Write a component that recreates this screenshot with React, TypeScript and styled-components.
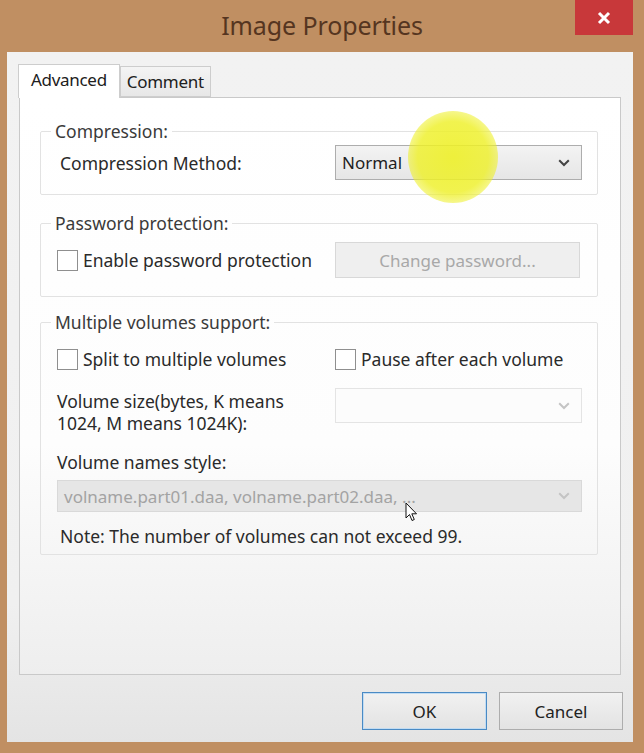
import styled, { createGlobalStyle } from 'styled-components';

const GlobalStyle = createGlobalStyle`
    html, body {
        margin: 0;
        padding: 0;
        background: #c08f62;
    }
    body {
        font-family: "Noto Sans", "Open Sans", sans-serif;
    }
`;

const Window = styled.div`
    position: relative;
    width: 644px;
    height: 753px;
    display: flex;
    flex-direction: column;
    background: #c08f62;
    overflow: hidden;
`;

const TitleBar = styled.div`
    height: 52px;
    display: grid;
    grid-template-columns: 1fr auto 1fr;
`;

const Title = styled.div`
    grid-column: 2;
    align-self: center;
    padding-bottom: 2px;
    font-size: 25px;
    color: #553520;
    letter-spacing: -0.1px;
`;

const CloseButton = styled.div`
    grid-column: 3;
    justify-self: end;
    align-self: start;
    width: 58px;
    height: 35px;
    margin-right: 11px;
    background: #c8383a;
    display: flex;
    align-items: center;
    justify-content: center;
`;

const Client = styled.div`
    flex: 1;
    margin: 0 11px 11px 7px;
    padding: 12px 12px 12px;
    display: flex;
    flex-direction: column;
    background: linear-gradient(#f2f2f2 0%, #f0f0f0 80%, #e4e4e4 100%);
`;

const TabStrip = styled.div`
    height: 33px;
    display: flex;
    align-items: flex-end;
    margin-left: -1px;
`;

const Tab = styled.div<{ $active?: boolean }>`
    position: relative;
    z-index: 1;
    box-sizing: border-box;
    height: ${(p) => (p.$active ? '34px' : '31px')};
    margin-bottom: ${(p) => (p.$active ? '-1px' : '0')};
    padding: 0 ${(p) => (p.$active ? '12px' : '6px')};
    display: flex;
    align-items: center;
    padding-bottom: ${(p) => (p.$active ? '4px' : '0')};
    border: 1px solid #cdcdcd;
    border-bottom: ${(p) => (p.$active ? 'none' : '1px solid #cdcdcd')};
    background: ${(p) => (p.$active ? '#ffffff' : 'linear-gradient(#f4f4f4, #e7e7e7)')};
    font-size: 17px;
    letter-spacing: -0.3px;
    color: #202020;
`;

const Panel = styled.div`
    flex: 1;
    border: 1px solid #c9c9c9;
    padding: 0 22px 0 20px;
    background: linear-gradient(#ffffff 0%, #fdfdfd 60%, #eeeeee 100%);
`;

const Group = styled.fieldset<{ $mt: number; $pt: number; $pb: number }>`
    margin: ${(p) => p.$mt}px 0 0 0;
    padding: ${(p) => p.$pt}px 15px ${(p) => p.$pb}px 16px;
    border: 1px solid #e2e2e2;
    border-radius: 2px;
    min-width: 0;
`;

const Legend = styled.legend`
    margin-left: -6px;
    padding: 0 4px;
    font-size: 17.5px;
    line-height: 20px;
    color: #3a3a3a;
`;

const Row = styled.div<{ $mt?: number; $top?: boolean }>`
    display: grid;
    grid-template-columns: 278px 1fr;
    align-items: ${(p) => (p.$top ? 'start' : 'center')};
    margin-top: ${(p) => p.$mt ?? 0}px;
`;

const Label = styled.div<{ $indent?: number; $mt?: number }>`
    padding-left: ${(p) => p.$indent ?? 0}px;
    margin-top: ${(p) => p.$mt ?? 0}px;
    font-size: 17.5px;
    line-height: 22px;
    color: #2a2a2a;
    white-space: nowrap;
`;

const WrapLabel = styled(Label)`
    padding-top: 2px;
`;

const CheckRow = styled.label`
    display: flex;
    align-items: center;
    gap: 5px;
    font-size: 17.5px;
    line-height: 22px;
    color: #2a2a2a;
    white-space: nowrap;
`;

const Box = styled.span`
    box-sizing: border-box;
    width: 21px;
    height: 21px;
    flex: none;
    border: 1px solid #8f8f8f;
    background: #ffffff;
`;

const Dropdown = styled.div<{ $variant: 'normal' | 'empty' | 'disabled'; $h: number; $mt?: number }>`
    box-sizing: border-box;
    height: ${(p) => p.$h}px;
    margin-top: ${(p) => p.$mt ?? 0}px;
    display: flex;
    align-items: center;
    justify-content: space-between;
    padding: 0 11px 0 6px;
    font-size: 17px;
    border: 1px solid
        ${(p) => (p.$variant === 'normal' ? '#adadad' : p.$variant === 'empty' ? '#e4e4e4' : '#d9d9d9')};
    background: ${(p) =>
        p.$variant === 'normal'
            ? 'linear-gradient(#f3f3f3, #e6e6e6)'
            : p.$variant === 'empty'
              ? '#fcfcfc'
              : '#e6e6e6'};
    color: ${(p) => (p.$variant === 'normal' ? '#1e1e1e' : '#a3a3a3')};
    white-space: nowrap;
`;

const PushButton = styled.div<{ $disabled?: boolean; $primary?: boolean; $w: number; $h: number }>`
    box-sizing: border-box;
    width: ${(p) => p.$w}px;
    height: ${(p) => p.$h}px;
    display: flex;
    align-items: center;
    justify-content: center;
    font-size: 17px;
    border: 1px solid ${(p) => (p.$primary ? '#4a8ac4' : p.$disabled ? '#d8d8d8' : '#adadad')};
    background: ${(p) => (p.$disabled ? '#efefef' : 'linear-gradient(#f1f1f1, #e3e3e3)')};
    color: ${(p) => (p.$disabled ? '#a8a8a8' : '#222')};
    box-shadow: ${(p) => (p.$primary ? 'inset 0 0 0 1px #c2dcf2' : 'none')};
`;

const ButtonBar = styled.div`
    margin-top: 17px;
    display: flex;
    justify-content: flex-end;
    gap: 12px;
    margin-right: -2px;
`;

const Highlight = styled.div`
    position: absolute;
    left: 408px;
    top: 111px;
    width: 90px;
    height: 92px;
    border-radius: 50%;
    background: radial-gradient(
        circle,
        rgba(238, 240, 40, 0.9) 0%,
        rgba(238, 240, 40, 0.82) 55%,
        rgba(238, 240, 40, 0.35) 82%,
        rgba(238, 240, 40, 0) 100%
    );
    pointer-events: none;
`;

const Cursor = styled.svg`
    position: absolute;
    left: 405px;
    top: 502px;
`;

const Chevron = ({ color }: { color: string }) => (
    <svg width="12" height="8" viewBox="0 0 12 8">
        <path d="M1.2 1.2 L6 6 L10.8 1.2" fill="none" stroke={color} strokeWidth="2" />
    </svg>
);

export default function App() {
    return (
        <>
            <GlobalStyle />
            <Window>
                <TitleBar>
                    <Title>Image Properties</Title>
                    <CloseButton>
                        <svg width="14" height="14" viewBox="0 0 14 14">
                            <path d="M2 2 L12 12 M12 2 L2 12" stroke="#fff" strokeWidth="3" />
                        </svg>
                    </CloseButton>
                </TitleBar>
                <Client>
                    <TabStrip>
                        <Tab $active>Advanced</Tab>
                        <Tab>Comment</Tab>
                    </TabStrip>
                    <Panel>
                        <Group $mt={23} $pt={4} $pb={14}>
                            <Legend>Compression:</Legend>
                            <Row>
                                <Label $indent={3}>Compression Method:</Label>
                                <Dropdown $variant="normal" $h={35}>
                                    <span>Normal</span>
                                    <Chevron color="#444" />
                                </Dropdown>
                            </Row>
                        </Group>

                        <Group $mt={18} $pt={9} $pb={18}>
                            <Legend>Password protection:</Legend>
                            <Row>
                                <CheckRow>
                                    <Box />
                                    Enable password protection
                                </CheckRow>
                                <PushButton $disabled $w={245} $h={36}>
                                    Change password...
                                </PushButton>
                            </Row>
                        </Group>

                        <Group $mt={15} $pt={16} $pb={7}>
                            <Legend>Multiple volumes support:</Legend>
                            <Row>
                                <CheckRow>
                                    <Box />
                                    Split to multiple volumes
                                </CheckRow>
                                <CheckRow>
                                    <Box />
                                    Pause after each volume
                                </CheckRow>
                            </Row>
                            <Row $mt={18} $top>
                                <WrapLabel>
                                    Volume size(bytes, K means
                                    <br />
                                    1024, M means 1024K):
                                </WrapLabel>
                                <Dropdown $variant="empty" $h={35}>
                                    <span />
                                    <Chevron color="#c4c4c4" />
                                </Dropdown>
                            </Row>
                            <Label $mt={17}>Volume names style:</Label>
                            <Dropdown $variant="disabled" $h={32} $mt={7}>
                                <span>volname.part01.daa, volname.part02.daa, ...</span>
                                <Chevron color="#c4c4c4" />
                            </Dropdown>
                            <Label $indent={3} $mt={13}>
                                Note: The number of volumes can not exceed 99.
                            </Label>
                        </Group>
                    </Panel>
                    <ButtonBar>
                        <PushButton $primary $w={125} $h={38}>
                            OK
                        </PushButton>
                        <PushButton $w={124} $h={38}>
                            Cancel
                        </PushButton>
                    </ButtonBar>
                </Client>
                <Highlight />
                <Cursor width="14" height="21" viewBox="0 0 14 21">
                    <path
                        d="M1 1 L1 16 L4.5 12.5 L7 18.5 L9.3 17.5 L6.8 11.8 L11.5 11.8 Z"
                        fill="#fff"
                        stroke="#111"
                        strokeWidth="1"
                        strokeLinejoin="round"
                    />
                </Cursor>
            </Window>
        </>
    );
}
